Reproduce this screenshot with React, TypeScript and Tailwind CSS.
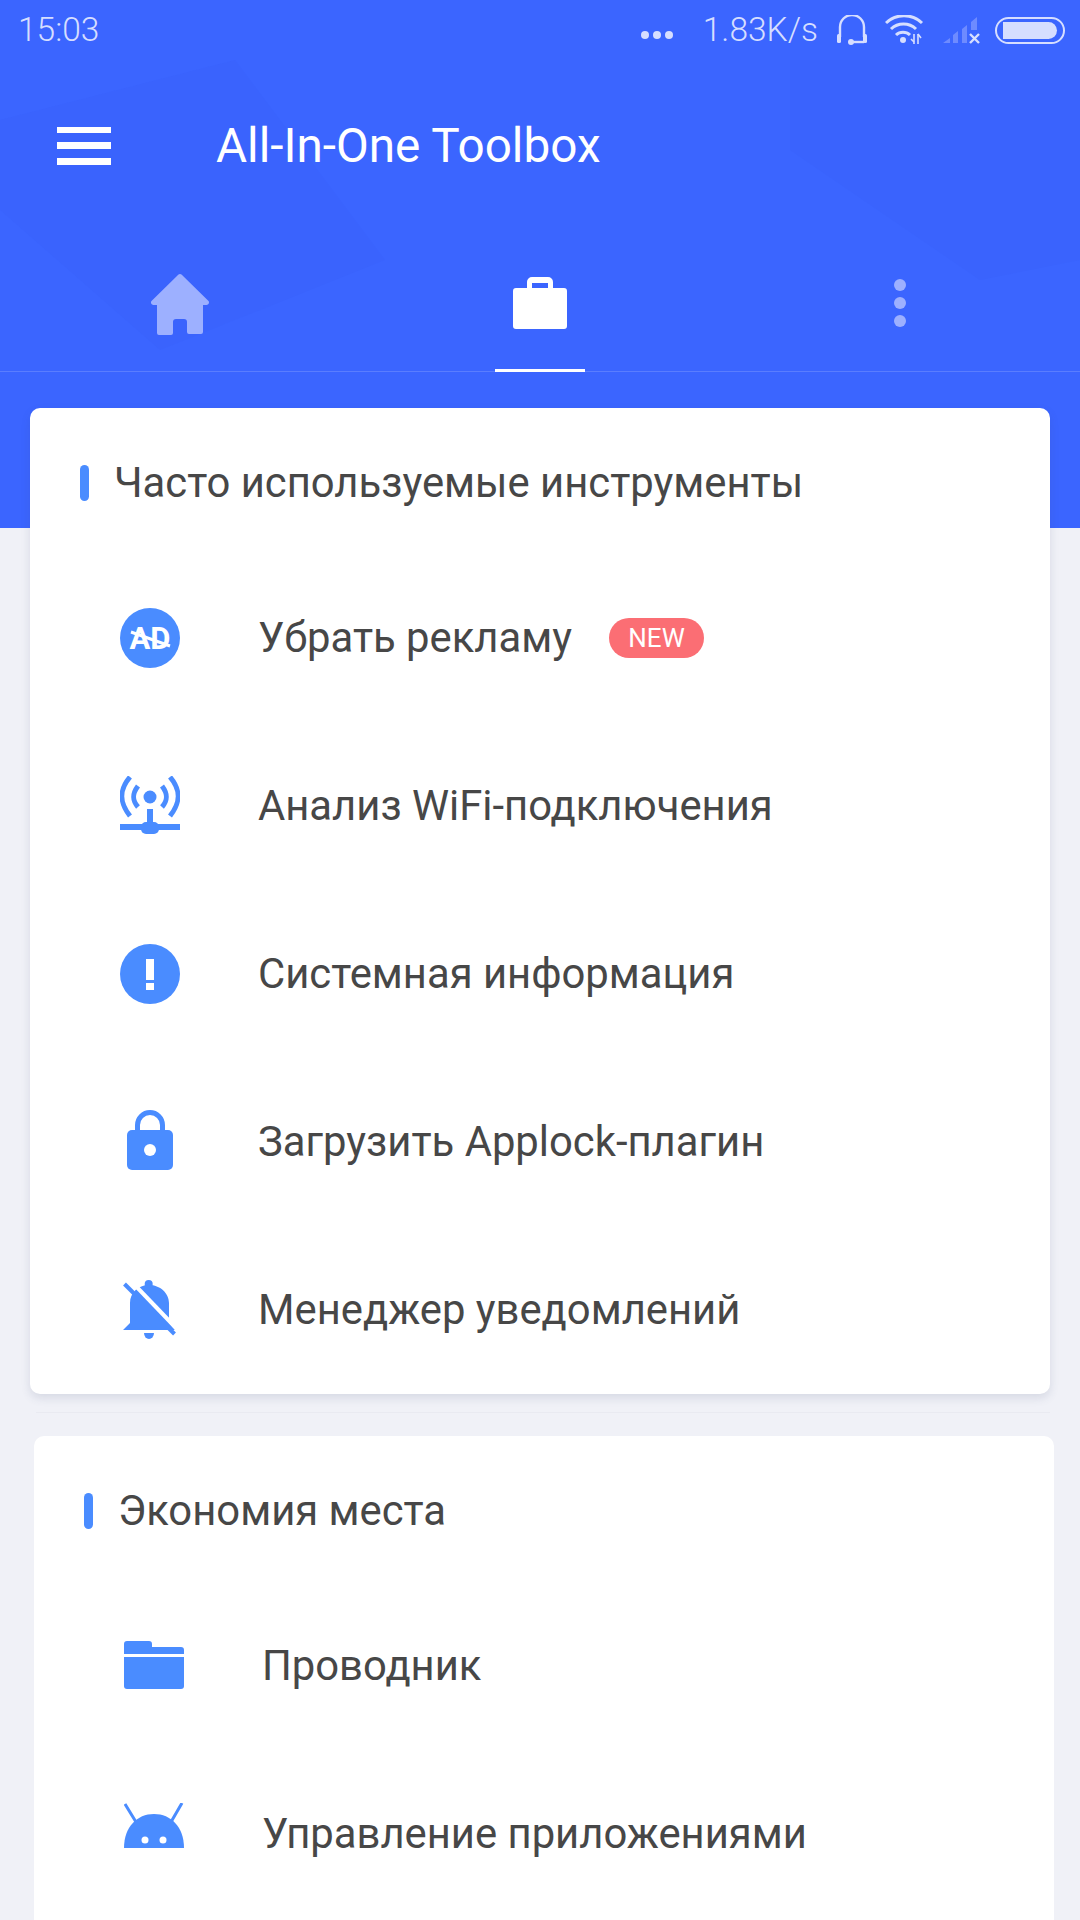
import { ReactNode } from 'react'

const font = { fontFamily: 'Roboto, "Noto Sans", sans-serif' }

function StatusBar() {
  return (
    <div className="flex h-[60px] items-center justify-between pl-[18px] pr-[15px] text-[33.5px] leading-none text-[#d6deff]">
      <span className="font-light">15:03</span>
      <div className="flex items-center">
        <div className="mt-[9px] flex gap-[4px]">
          <span className="h-[8px] w-[8px] rounded-full bg-[#d6deff]" />
          <span className="h-[8px] w-[8px] rounded-full bg-[#d6deff]" />
          <span className="h-[8px] w-[8px] rounded-full bg-[#d6deff]" />
        </div>
        <span className="ml-[30px] font-light">1.83K/s</span>
        <svg className="ml-[18px]" width="32" height="30" viewBox="0 0 32 30" fill="none" stroke="#d6deff">
          <path d="M4 22V12a12 12 0 0 1 24 0v10" strokeWidth="2.4" />
          <rect x="1" y="19" width="4" height="9" rx="1.5" fill="#d6deff" stroke="none" />
          <rect x="27" y="19" width="4" height="9" rx="1.5" fill="#d6deff" stroke="none" />
          <path d="M15 27h13" strokeWidth="2.4" />
          <circle cx="15" cy="27" r="3" fill="#d6deff" stroke="none" />
        </svg>
        <svg className="ml-[17px]" width="40" height="30" viewBox="0 0 40 30" fill="none" stroke="#d6deff" strokeWidth="3">
          <path d="M1 8a26 26 0 0 1 36 0" />
          <path d="M6 14a18 18 0 0 1 25 0" />
          <path d="M11 20a10 10 0 0 1 14 0" />
          <circle cx="18" cy="25" r="3" fill="#d6deff" stroke="none" />
          <path d="M29 19v10M33 19v10" strokeWidth="1.6" />
          <path d="M26 24l3 3M36 23l-3-4" strokeWidth="1.6" />
        </svg>
        <svg className="ml-[18px]" width="38" height="28" viewBox="0 0 38 28">
          <path d="M0 27l7-5v5zM10 27v-8l5-4v12zM19 27V13l5-4v18zM28 14V6l6-5v13z" fill="#6e8bff" />
          <path d="M27 18l9 9M36 18l-9 9" stroke="#d6deff" strokeWidth="2.4" />
        </svg>
        <div className="ml-[14px] flex h-[27px] w-[70px] items-center rounded-full border-2 border-[#d6deff] px-[6px]">
          <div className="h-[17px] w-full rounded-r-full rounded-l-[3px] bg-[#d6deff]" />
        </div>
      </div>
    </div>
  )
}

function Tabs() {
  return (
    <div className="mt-[28px] grid h-[112px] grid-cols-[360px_360px_360px] border-b border-[#5a7dff]">
      <div className="flex justify-center pt-[13px]">
        <svg width="60" height="62" viewBox="0 0 60 62" fill="#9db0ff">
          <path d="M30 1a2 2 0 0 1 1.5.6l27 26.5c1.2 1.5.2 3.6-2 3.900H53v27a2 2 0 0 1-2 2H39a2 2 0 0 1-2-2V49a3 3 0 0 0-3-3h-8a3 3 0 0 0-3 3v11a2 2 0 0 1-2 2H9a2 2 0 0 1-2-2V32H3.500c-2.200-.3-3.200-2.400-2-3.900l27-26.500A2 2 0 0 1 30 1z" />
        </svg>
      </div>
      <div className="relative flex justify-center pt-[17px]">
        <svg width="54" height="52" viewBox="0 0 54 52" fill="#ffffff">
          <path d="M3 11h11V5a5 5 0 0 1 5-5h16a5 5 0 0 1 5 5v6h11a3 3 0 0 1 3 3v35a3 3 0 0 1-3 3H3a3 3 0 0 1-3-3V14a3 3 0 0 1 3-3zm16-5v5h16V6H19z" fillRule="evenodd" />
        </svg>
        <div className="absolute bottom-[-1px] left-[135px] h-[3px] w-[90px] bg-white" />
      </div>
      <div className="flex flex-col items-center gap-[6px] pt-[19px]">
        <span className="h-[12px] w-[12px] rounded-full bg-[#9db0ff]" />
        <span className="h-[12px] w-[12px] rounded-full bg-[#9db0ff]" />
        <span className="h-[12px] w-[12px] rounded-full bg-[#9db0ff]" />
      </div>
    </div>
  )
}

function Row({ icon, label, badge }: { icon: ReactNode; label: string; badge?: boolean }) {
  return (
    <div className="flex h-[168px] items-center">
      <div className="flex w-[60px] justify-center">{icon}</div>
      <span className="ml-[78px] text-[41.8px] leading-none text-[#474747]">{label}</span>
      {badge && (
        <span className="ml-[37px] flex h-[40px] w-[95px] items-center justify-center rounded-full bg-[#fb6e74] text-[26px] leading-none text-white">
          NEW
        </span>
      )}
    </div>
  )
}

function CardTitle({ children }: { children: ReactNode }) {
  return (
    <div className="flex items-center pl-[50px]">
      <span className="h-[36px] w-[9px] rounded-full bg-[#4a8cff]" />
      <span className="ml-[25px] text-[41.8px] leading-none text-[#474747]">{children}</span>
    </div>
  )
}

const blue = '#4a8cff'

const AdIcon = (
  <svg width="60" height="60" viewBox="0 0 60 60">
    <circle cx="30" cy="30" r="30" fill={blue} />
    <text x="30" y="41" textAnchor="middle" fontSize="31" fontWeight="700" fill="#fff" style={font}>AD</text>
    <path d="M11 24l39 14" stroke="#fff" strokeWidth="3" />
  </svg>
)

const WifiIcon = (
  <svg width="60" height="60" viewBox="0 0 60 60" fill="none" stroke={blue} strokeWidth="5">
    <path d="M10 1C-1 14-1 26 10 40M50 1c11 13 11 25 0 39" />
    <path d="M18 10c-6 8-6 14 0 21M42 10c6 8 6 14 0 21" />
    <circle cx="30" cy="21" r="6.500" fill={blue} stroke="none" />
    <path d="M30 33v20" strokeWidth="6" />
    <path d="M0 51h60" strokeWidth="6" />
    <rect x="21" y="46" width="18" height="12" rx="5" fill={blue} stroke="none" />
  </svg>
)

const InfoIcon = (
  <svg width="60" height="60" viewBox="0 0 60 60">
    <circle cx="30" cy="30" r="30" fill={blue} />
    <rect x="26" y="15" width="8" height="21" fill="#fff" />
    <rect x="26" y="39" width="8" height="7" fill="#fff" />
  </svg>
)

const LockIcon = (
  <svg className="mb-[4px]" width="46" height="60" viewBox="0 0 46 60">
    <path d="M10.500 22v-7a12.500 12.500 0 0 1 25 0v7" fill="none" stroke={blue} strokeWidth="5" />
    <rect x="0" y="20" width="46" height="40" rx="5" fill={blue} />
    <circle cx="23" cy="40" r="6" fill="#fff" />
  </svg>
)

const BellOffIcon = (
  <svg width="54" height="60" viewBox="0 0 54 60">
    <circle cx="25.700" cy="4" r="4" fill={blue} />
    <path d="M7 43V23C7 13 15 5 26 5s20 8 20 18v20l6 7H0z" fill={blue} />
    <path d="M21 53h10a5 6 0 0 1-10 0z" fill={blue} />
    <path d="M8 1l46 48" stroke="#fff" strokeWidth="4" />
    <path d="M1.500 4l50 50" stroke={blue} strokeWidth="4" />
  </svg>
)

const FolderIcon = (
  <svg className="mb-[2px]" width="60" height="48" viewBox="0 0 60 48" fill={blue}>
    <path d="M0 13V3a3 3 0 0 1 3-3h22a3 3 0 0 1 3 3v3h29a3 3 0 0 1 3 3v4z" />
    <path d="M0 16h60v29a3 3 0 0 1-3 3H3a3 3 0 0 1-3-3z" />
  </svg>
)

const AndroidIcon = (
  <svg className="mb-[16px]" width="60" height="45" viewBox="0 0 60 45">
    <path d="M1 1l11 18M58 0L47 19" stroke={blue} strokeWidth="3" />
    <path d="M0 45C0 24 13 11 30 11s30 13 30 34z" fill={blue} />
    <circle cx="21" cy="37" r="3.500" fill="#fff" />
    <circle cx="39" cy="37" r="3.500" fill="#fff" />
  </svg>
)

export default function App() {
  return (
    <div className="relative h-[1920px] w-[1080px] overflow-hidden bg-[#f0f1f7]" style={font}>
      <div className="relative h-[528px] bg-[#3b65ff]">
        {/* faint shapes in the header */}
        <svg className="absolute left-0 top-[60px]" width="1080" height="468" viewBox="0 0 1080 468">
          <path d="M0 60L235 0l150 200L160 290 0 150z" fill="#3860fa" opacity="0.3" />
          <path d="M790 0h290v200l-100 20-190-130z" fill="#3860fa" opacity="0.3" />
        </svg>
        <div className="relative">
          <StatusBar />
          <div className="flex h-[172px] items-center">
            <div className="ml-[57px] flex w-[54px] flex-col gap-[9px]">
              <span className="h-[6px] bg-white" />
              <span className="h-[7px] bg-white" />
              <span className="h-[7px] bg-white" />
            </div>
            <span className="ml-[105px] pt-[2px] text-[47.7px] leading-none text-white">All-In-One Toolbox</span>
          </div>
          <Tabs />
        </div>
      </div>

      <div className="mt-[-120px] relative flex flex-col">
        <div className="ml-[30px] w-[1020px] rounded-[10px] bg-white pt-[54px] shadow-[0_4px_10px_rgba(60,70,110,0.14)]">
          <CardTitle>Часто используемые инструменты</CardTitle>
          <div className="mt-[50px] pl-[90px]">
            <Row icon={AdIcon} label="Убрать рекламу" badge />
            <Row icon={WifiIcon} label="Анализ WiFi-подключения" />
            <Row icon={InfoIcon} label="Системная информация" />
            <Row icon={LockIcon} label="Загрузить Applock-плагин" />
            <Row icon={BellOffIcon} label="Менеджер уведомлений" />
          </div>
        </div>
        <div className="ml-[36px] mt-[18px] h-px w-[1014px] bg-[#e9eaf1]" />
        <div className="ml-[34px] mt-[23px] w-[1020px] rounded-[10px] bg-white pb-[60px] pt-[54px]">
          <CardTitle>Экономия места</CardTitle>
          <div className="mt-[50px] pl-[90px]">
            <Row icon={FolderIcon} label="Проводник" />
            <Row icon={AndroidIcon} label="Управление приложениями" />
          </div>
        </div>
      </div>
    </div>
  )
}
